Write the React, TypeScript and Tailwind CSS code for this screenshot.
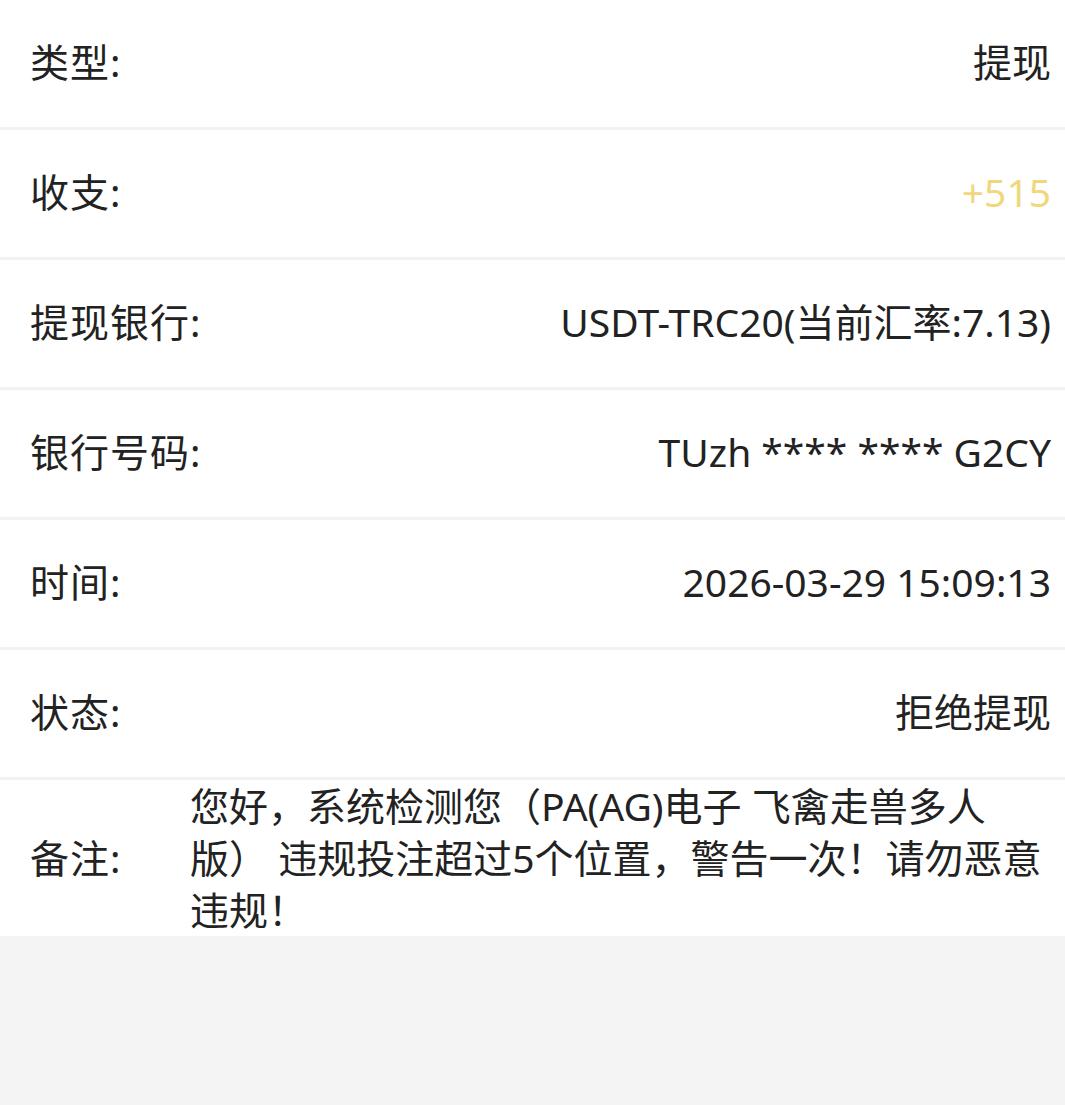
import React from 'react'

const rows: { label: string; value: string; gold?: boolean }[] = [
  { label: '类型:', value: '提现' },
  { label: '收支:', value: '+515', gold: true },
  { label: '提现银行:', value: 'USDT-TRC20(当前汇率:7.13)' },
  { label: '银行号码:', value: 'TUzh **** **** G2CY' },
  { label: '时间:', value: '2026-03-29 15:09:13' },
  { label: '状态:', value: '拒绝提现' },
]

export default function App() {
  return (
    <div
      className="min-h-[1105px] w-full bg-[#f4f4f4] text-[#222222]"
      style={{ fontFamily: '"Noto Sans", "Noto Sans CJK SC", sans-serif' }}
    >
      <div className="bg-white">
        {rows.map((r) => (
          <div
            key={r.label}
            className="flex h-[130px] items-center justify-between border-b-[3px] border-[#f2f2f2] pl-[30px] pr-[14px] pb-[3px] text-[39px]"
          >
            <span className="tracking-[1px]">{r.label}</span>
            <span className={r.gold ? 'text-[#f0d77c]' : ''}>{r.value}</span>
          </div>
        ))}
        <div className="flex h-[156px] items-center pr-[14px] text-[39px] leading-[52px]">
          <span className="w-[190px] shrink-0 pl-[30px] tracking-[1px]">备注:</span>
          <p className="flex-1">
            您好，系统检测您（PA(AG)电子 飞禽走兽多人版） 违规投注超过5个位置，警告一次！请勿恶意违规！
          </p>
        </div>
      </div>
    </div>
  )
}
